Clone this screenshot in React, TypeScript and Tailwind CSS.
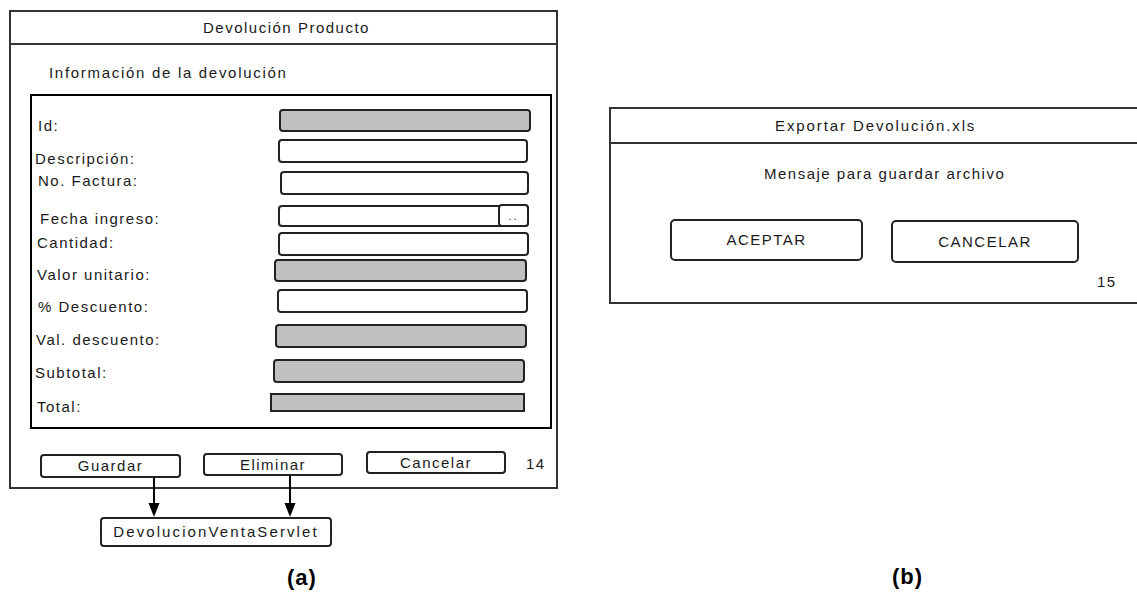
import React from 'react';

// labels of the "Información de la devolución" box, each with its own offset
const labels = [
  { text: 'Id:', cls: 'mt-[22px] ml-[6px]' },
  { text: 'Descripción:', cls: 'mt-[17px] ml-[3px]' },
  { text: 'No. Factura:', cls: 'mt-[6px] ml-[6px]' },
  { text: 'Fecha ingreso:', cls: 'mt-[22px] ml-[8px]' },
  { text: 'Cantidad:', cls: 'mt-[8px] ml-[5px]' },
  { text: 'Valor unitario:', cls: 'mt-[16px] ml-[5px]' },
  { text: '% Descuento:', cls: 'mt-[16px] ml-[6px]' },
  { text: 'Val. descuento:', cls: 'mt-[17px] ml-[4px]' },
  { text: 'Subtotal:', cls: 'mt-[17px] ml-[3px]' },
  { text: 'Total:', cls: 'mt-[18px] ml-[5px]' },
];

const fields = [
  { cls: 'mt-[13px] ml-[9px] w-[252px] h-[23px] bg-[#c0c0c0] rounded-[4px]' },
  { cls: 'mt-[7px] ml-[8px] w-[250px] h-[24px] bg-white rounded-[4px]' },
  { cls: 'mt-[8px] ml-[10px] w-[249px] h-[24px] bg-white rounded-[4px]' },
  { cls: 'mt-[10px] ml-[8px] w-[251px] h-[22px] bg-white rounded-[4px]', picker: true },
  { cls: 'mt-[5px] ml-[8px] w-[251px] h-[24px] bg-white rounded-[4px]' },
  { cls: 'mt-[3px] ml-[4px] w-[253px] h-[23px] bg-[#c0c0c0] rounded-[4px]' },
  { cls: 'mt-[7px] ml-[7px] w-[251px] h-[24px] bg-white rounded-[4px]' },
  { cls: 'mt-[11px] ml-[5px] w-[252px] h-[24px] bg-[#c0c0c0] rounded-[4px]' },
  { cls: 'mt-[11px] ml-[3px] w-[252px] h-[24px] bg-[#c0c0c0] rounded-[4px]' },
  { cls: 'mt-[10px] ml-[0px] w-[255px] h-[19px] bg-[#c0c0c0] rounded-none' },
];

const Arrows: React.FC = () => (
  <svg className="absolute left-[140px] top-[476px]" width="170" height="44" viewBox="0 0 170 44">
    <line x1="14" y1="2" x2="14" y2="30" stroke="#000" strokeWidth="2" />
    <polygon points="8.5,27 19.5,27 14,41" fill="#000" />
    <line x1="150" y1="0" x2="150" y2="30" stroke="#000" strokeWidth="2" />
    <polygon points="144.5,27 155.5,27 150,41" fill="#000" />
  </svg>
);

const App: React.FC = () => {
  return (
    <div className="relative w-[1137px] h-[599px] overflow-hidden bg-white text-[#1a1a1a] font-['Liberation_Sans',Arial,sans-serif] text-[15px] leading-[16px] tracking-[1.5px] flex">
      {/* (a) Devolución Producto */}
      <div className="w-[604px] shrink-0 flex flex-col">
        <div className="ml-[9px] mt-[10px] w-[549px] h-[479px] border-2 border-[#333] flex flex-col">
          <div className="h-[33px] shrink-0 border-b-2 border-[#333] flex items-center pl-[192px]">
            Devolución Producto
          </div>
          <div className="pl-[38px] pt-[20px] tracking-[1.7px]">Información de la devolución</div>

          <div className="ml-[19px] mt-[13px] w-[522px] h-[335px] border-2 border-black flex">
            <div className="w-[238px] shrink-0 flex flex-col">
              {labels.map((l) => (
                <div key={l.text} className={l.cls}>{l.text}</div>
              ))}
            </div>
            <div className="flex flex-col">
              {fields.map((f, i) => (
                <div key={i} className={`${f.cls} border-2 border-[#222] flex justify-end`}>
                  {f.picker && (
                    <div className="-mt-[3px] -mb-[2px] -mr-[2px] w-[31px] h-[23px] border-2 border-[#222] rounded-[4px] bg-white flex items-end justify-center pb-[4px] text-[11px] leading-[10px] tracking-[2px]">
                      ..
                    </div>
                  )}
                </div>
              ))}
            </div>
          </div>

          <div className="mt-[22px] flex items-start">
            <div className="mt-[3px] ml-[29px] w-[141px] h-[24px] border-2 border-[#222] rounded-[4px] flex items-center justify-center">
              Guardar
            </div>
            <div className="mt-[2px] ml-[22px] w-[140px] h-[23px] border-2 border-[#222] rounded-[4px] flex items-center justify-center">
              Eliminar
            </div>
            <div className="ml-[23px] w-[140px] h-[23px] border-2 border-[#222] rounded-[4px] flex items-center justify-center">
              Cancelar
            </div>
            <div className="ml-[20px] mt-[5px]">14</div>
          </div>
        </div>

        <div className="ml-[100px] mt-[28px] w-[232px] h-[30px] border-2 border-[#222] rounded-[4px] flex items-center justify-center tracking-[2.1px]">
          DevolucionVentaServlet
        </div>
        <div className="mt-[18px] text-center text-[22px] leading-[26px] font-bold tracking-[1px] text-black">(a)</div>
      </div>

      {/* (b) Exportar Devolución.xls */}
      <div className="flex-1 flex flex-col">
        <div className="ml-[5px] mt-[107px] w-[545px] h-[197px] shrink-0 border-2 border-[#333] flex flex-col">
          <div className="h-[35px] shrink-0 border-b-2 border-[#333] flex items-center pl-[164px] tracking-[1.9px]">
            Exportar Devolución.xls
          </div>
          <div className="pl-[153px] pt-[22px]">Mensaje para guardar archivo</div>
          <div className="mt-[37px] flex items-start">
            <div className="ml-[59px] w-[193px] h-[42px] border-2 border-[#222] rounded-[5px] flex items-center justify-center">
              ACEPTAR
            </div>
            <div className="ml-[28px] mt-[1px] w-[188px] h-[43px] border-2 border-[#222] rounded-[5px] flex items-center justify-center">
              CANCELAR
            </div>
          </div>
          <div className="pl-[486px] mt-[11px]">15</div>
        </div>
        <div className="ml-[288px] mt-[260px] text-[22px] leading-[26px] font-bold tracking-[1px] text-black">(b)</div>
      </div>

      <Arrows />
    </div>
  );
};

export default App;
